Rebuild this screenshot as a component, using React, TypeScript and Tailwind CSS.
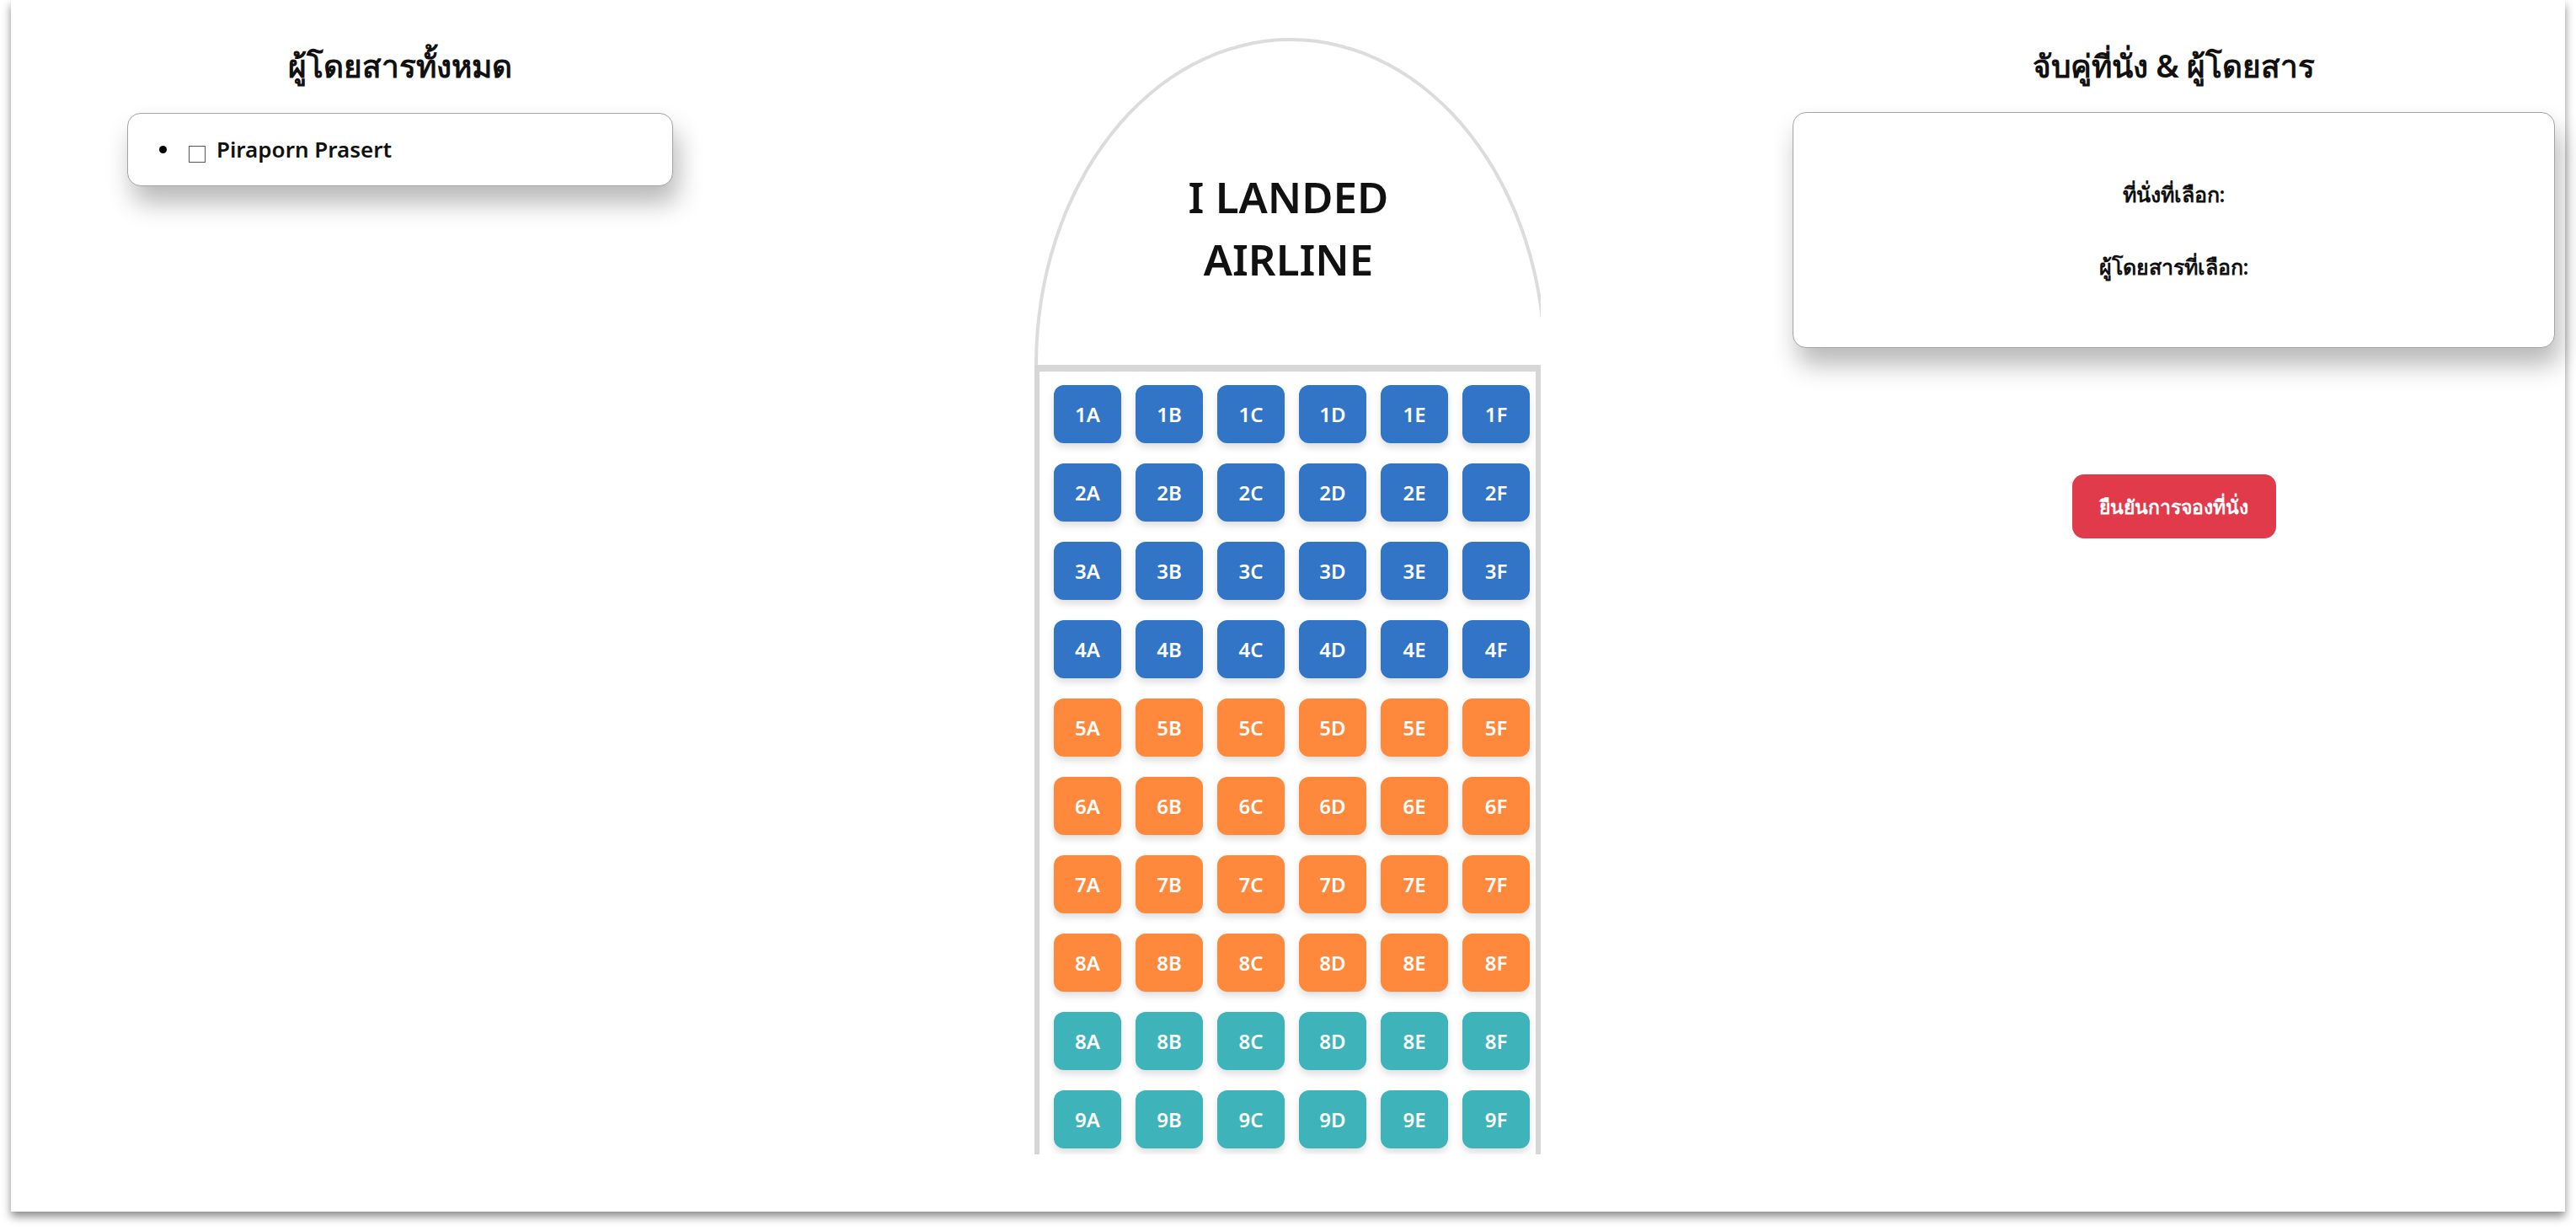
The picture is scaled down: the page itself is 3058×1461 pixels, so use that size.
const seatRows = [
  { label: '1', color: 'bg-[#3274c6]' },
  { label: '2', color: 'bg-[#3274c6]' },
  { label: '3', color: 'bg-[#3274c6]' },
  { label: '4', color: 'bg-[#3274c6]' },
  { label: '5', color: 'bg-[#fe893c]' },
  { label: '6', color: 'bg-[#fe893c]' },
  { label: '7', color: 'bg-[#fe893c]' },
  { label: '8', color: 'bg-[#fe893c]' },
  { label: '8', color: 'bg-[#3eb4ba]' },
  { label: '9', color: 'bg-[#3eb4ba]' },
]

const letters = ['A', 'B', 'C', 'D', 'E', 'F']

const Plane = () => {
  return (
    <div className="mt-[45px] flex w-[601px] flex-col overflow-hidden">
      <div className="h-[388px] w-[608px] shrink-0 rounded-[50%_50%_0_0/100%_100%_0_0] border-[4px] border-b-0 border-[#dcdcdc] pt-[147px]">
        <h1 className="w-[595px] text-center text-[51px] leading-[74px] font-semibold text-[#111]">
          I LANDED
          <br />
          AIRLINE
        </h1>
      </div>
      <div className="grid grid-cols-[repeat(6,80px)] gap-x-[17px] gap-y-[24px] border-x-[6px] border-t-[8px] border-[#d6d6d6] pt-[16px] pb-[7px] pl-[17px]">
        {seatRows.map((row, i) =>
          letters.map((l) => (
            <button
              key={`${i}-${l}`}
              className={`flex h-[69px] w-[80px] items-center justify-center rounded-[12px] text-[24px] font-semibold text-white shadow-[0_5px_9px_rgba(0,0,0,0.13)] ${row.color}`}
            >
              {row.label}
              {l}
            </button>
          )),
        )}
      </div>
    </div>
  )
}

const App = () => {
  return (
    <div className="min-h-screen bg-white pl-[13px] font-['Noto_Sans',sans-serif]">
      <div className="flex h-[1438px] w-[3032px] items-start bg-white shadow-[0_6px_10px_rgba(0,0,0,0.45)]">
        {/* passengers */}
        <div className="flex w-[924px] flex-col items-center">
          <h2 className="mt-[54px] h-[48px] text-[37px] leading-[48px] font-semibold text-[#111]">
            ผู้โดยสารทั้งหมด
          </h2>
          <div className="mt-[32px] flex h-[87px] w-[648px] items-center rounded-[16px] border border-[#a3a3a3] bg-white pl-[37px] shadow-[6px_20px_30px_rgba(0,0,0,0.28)]">
            <span className="h-[9px] w-[9px] rounded-full bg-black" />
            <span className="mt-[10px] ml-[26px] h-[20px] w-[20px] border-[1.5px] border-[#555]" />
            <span className="ml-[13px] text-[26px] font-semibold text-[#111]">Piraporn Prasert</span>
          </div>
        </div>

        <div className="ml-[291px]">
          <Plane />
        </div>

        {/* pairing */}
        <div className="ml-[299px] flex w-[905px] flex-col items-center">
          <h2 className="mt-[54px] h-[48px] text-[37px] leading-[48px] font-semibold text-[#111]">
            จับคู่ที่นั่ง &amp; ผู้โดยสาร
          </h2>
          <div className="mt-[31px] flex h-[280px] w-[905px] flex-col items-center justify-center gap-[52px] rounded-[16px] border border-[#a3a3a3] bg-white shadow-[6px_20px_30px_rgba(0,0,0,0.28)]">
            <p className="text-[25px] leading-[34px] font-semibold text-[#111]">ที่นั่งที่เลือก:</p>
            <p className="text-[25px] leading-[34px] font-semibold text-[#111]">ผู้โดยสารที่เลือก:</p>
          </div>
          <button className="mt-[150px] h-[76px] w-[242px] rounded-[14px] bg-[#e13a4b] text-[23px] font-semibold text-white">
            ยืนยันการจองที่นั่ง
          </button>
        </div>
      </div>
    </div>
  )
}

export default App
